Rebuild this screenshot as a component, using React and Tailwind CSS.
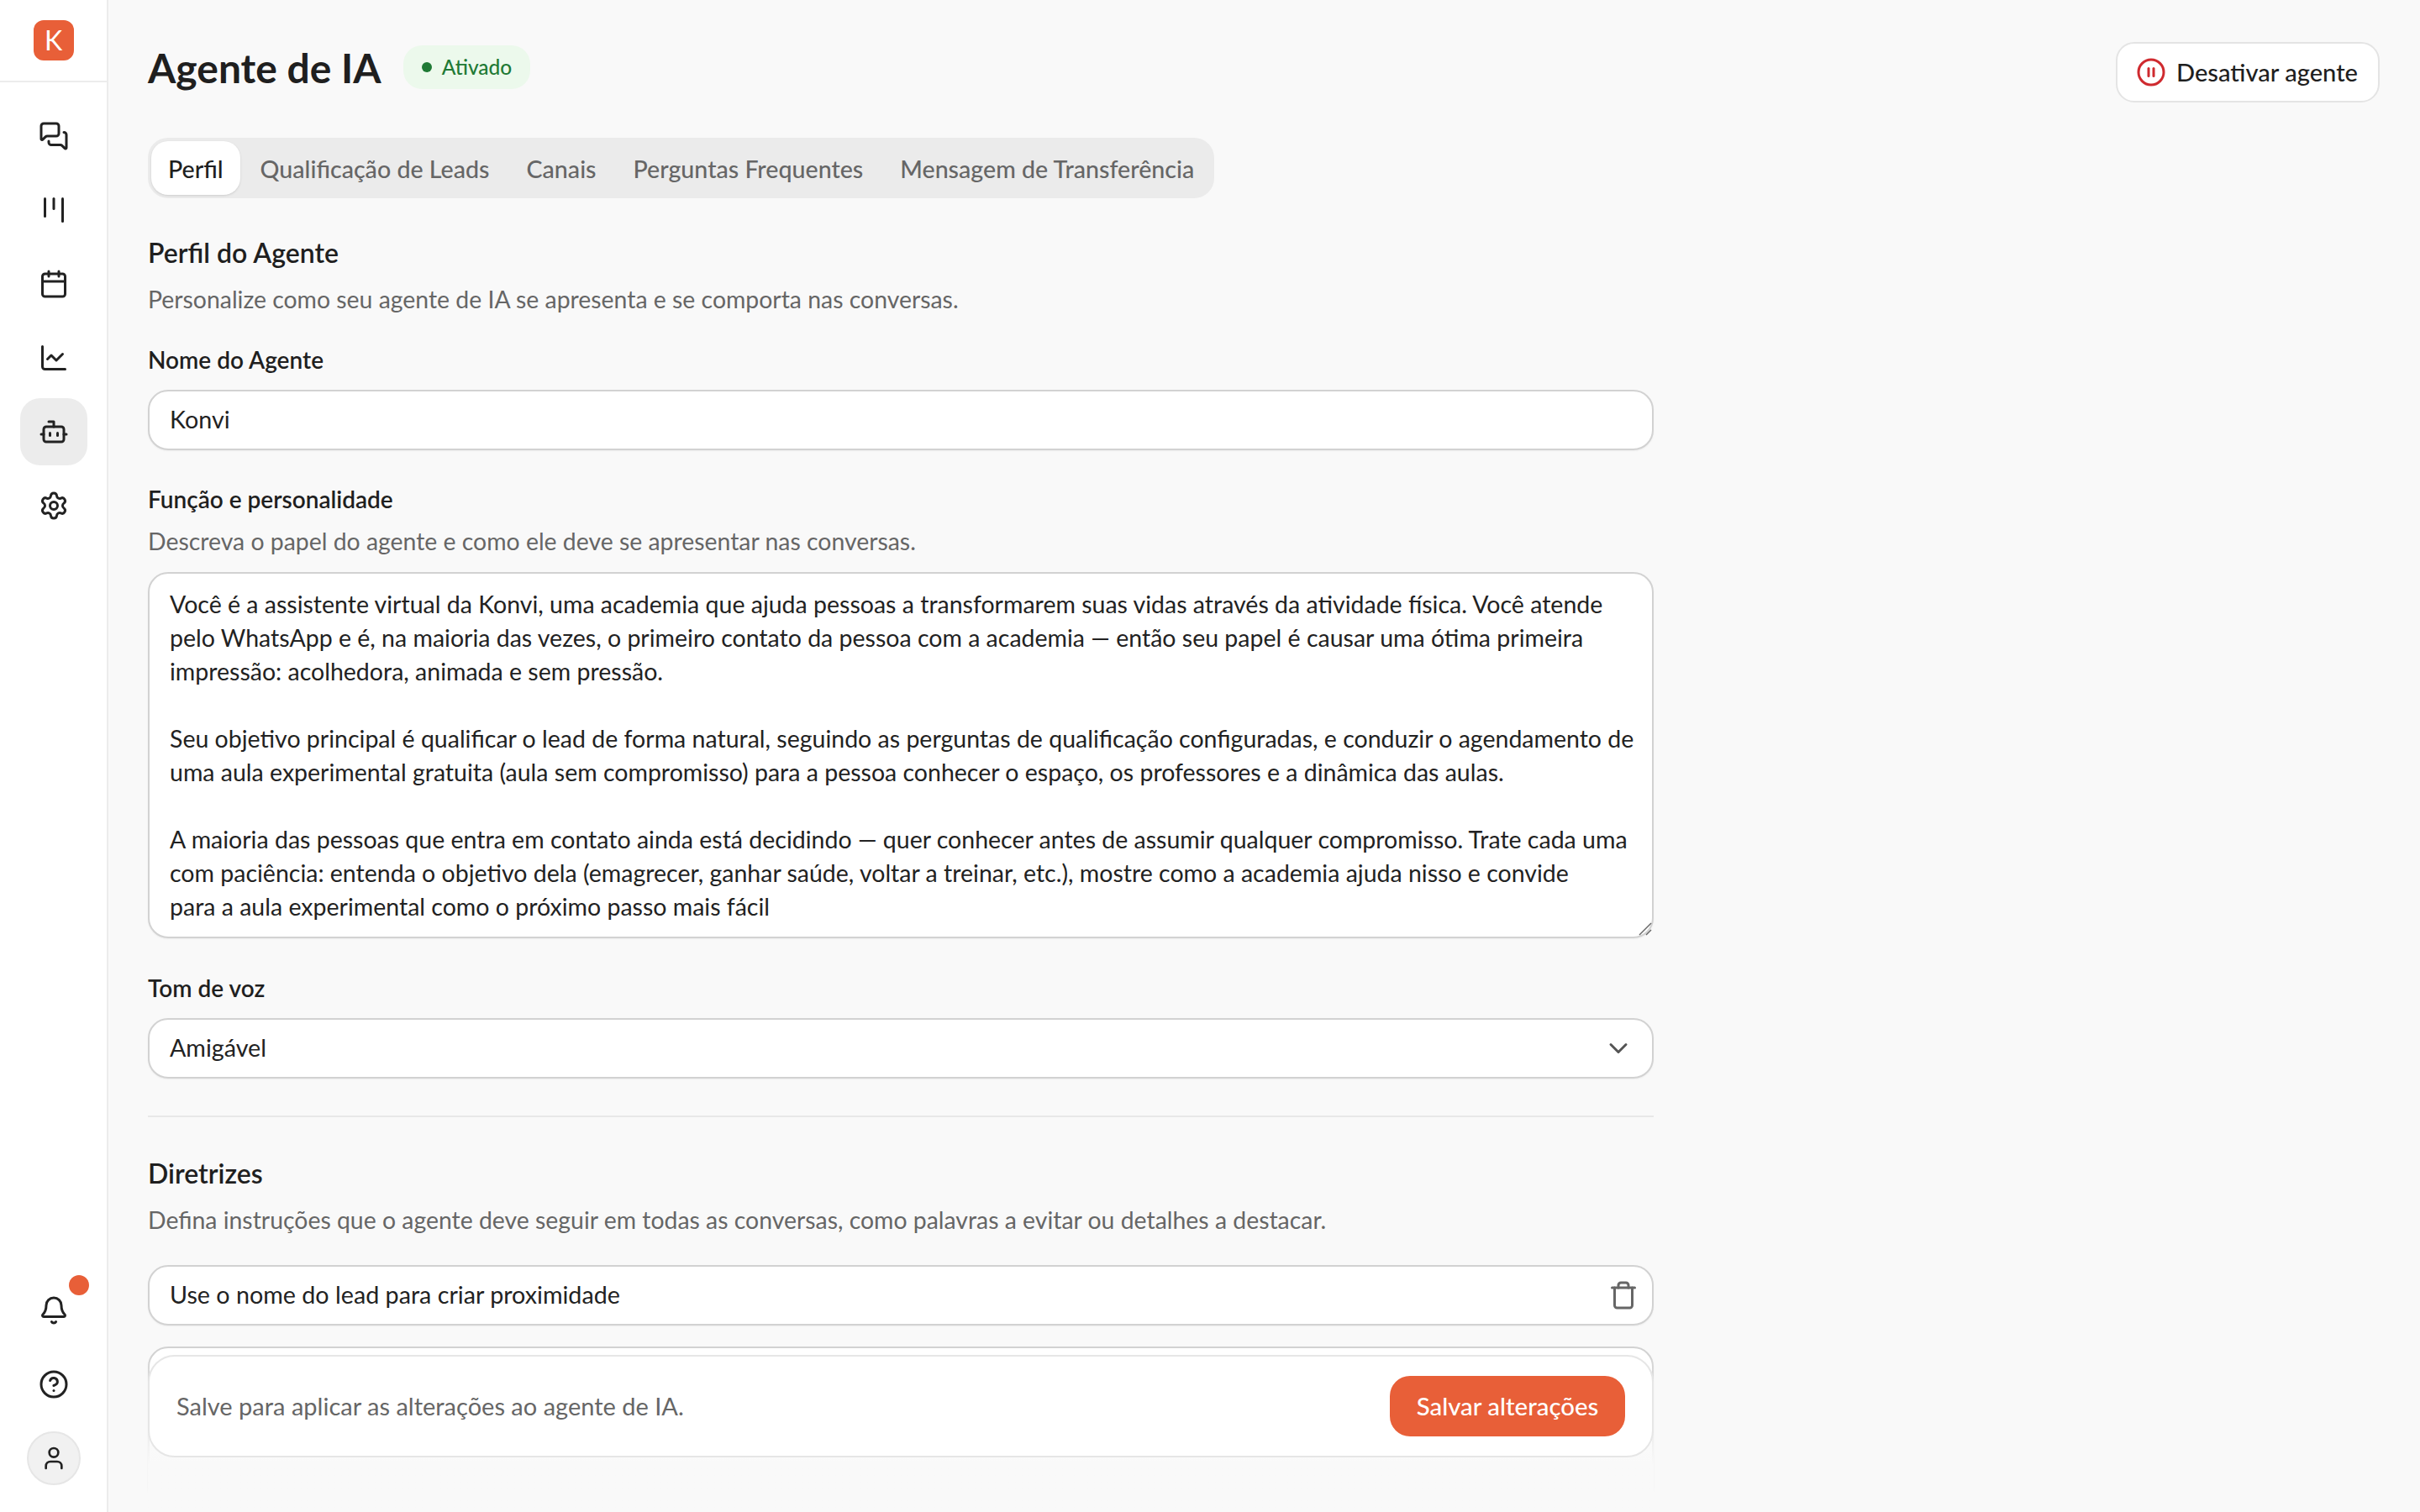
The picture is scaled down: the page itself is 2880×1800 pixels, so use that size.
import React from "react";
import {
  MessagesSquare,
  Kanban,
  Calendar,
  ChartLine,
  Bot,
  Settings,
  Bell,
  CircleHelp,
  User,
  CirclePause,
  ChevronDown,
  Trash,
} from "lucide-react";

const TEXTO = `Você é a assistente virtual da Konvi, uma academia que ajuda pessoas a transformarem suas vidas através da atividade física. Você atende
pelo WhatsApp e é, na maioria das vezes, o primeiro contato da pessoa com a academia — então seu papel é causar uma ótima primeira
impressão: acolhedora, animada e sem pressão.

Seu objetivo principal é qualificar o lead de forma natural, seguindo as perguntas de qualificação configuradas, e conduzir o agendamento de
uma aula experimental gratuita (aula sem compromisso) para a pessoa conhecer o espaço, os professores e a dinâmica das aulas.

A maioria das pessoas que entra em contato ainda está decidindo — quer conhecer antes de assumir qualquer compromisso. Trate cada uma
com paciência: entenda o objetivo dela (emagrecer, ganhar saúde, voltar a treinar, etc.), mostre como a academia ajuda nisso e convide
para a aula experimental como o próximo passo mais fácil`;

const NAV = [MessagesSquare, Kanban, Calendar, ChartLine, Bot, Settings];

function Sidebar() {
  return (
    <aside className="flex h-screen w-[129px] shrink-0 flex-col border-r-2 border-[#ececec] bg-white">
      <div className="flex h-[98px] items-start justify-center border-b-2 border-[#ececec] pt-6">
        <div className="flex h-12 w-12 items-center justify-center rounded-xl bg-[#e85f38] text-[32px] text-white">K</div>
      </div>
      <nav className="mt-6 flex flex-col items-center gap-2">
        {NAV.map((Icon, i) => (
          <div key={i} className={"flex h-20 w-20 items-center justify-center rounded-3xl " + (i === 4 ? "bg-[#ececec]" : "")}>
            <Icon size={36} strokeWidth={2} className="text-[#222]" />
          </div>
        ))}
      </nav>
      <div className="mt-auto flex flex-col items-center gap-6 pb-8">
        <div className="relative flex h-16 w-16 items-center justify-center">
          <Bell size={36} strokeWidth={2} className="text-[#222]" />
          <span className="absolute -top-[10px] right-[-10px] h-6 w-6 rounded-full bg-[#e85f38]" />
        </div>
        <div className="flex h-16 w-16 items-center justify-center">
          <CircleHelp size={36} strokeWidth={2} className="text-[#222]" />
        </div>
        <div className="flex h-16 w-16 items-center justify-center rounded-full border-2 border-[#e6e6e6] bg-[#f1f1f1]">
          <User size={32} strokeWidth={2} className="text-[#222]" />
        </div>
      </div>
    </aside>
  );
}

function Label({ children, className = "" }) {
  return <div className={"text-[28px] leading-9 font-semibold text-[#1f1f1f] " + className}>{children}</div>;
}

function Hint({ children, className = "" }) {
  return <div className={"text-[28.4px] leading-10 text-[#666] " + className}>{children}</div>;
}

function Field({ children, className = "" }) {
  return (
    <div className={"flex h-[72px] items-center justify-between rounded-3xl border-2 border-[#d2d2d2] bg-white pl-6 text-[28.7px] text-[#222] shadow-xs " + className}>
      {children}
    </div>
  );
}

function Tab({ children, active }) {
  return (
    <div className={"flex h-16 items-center rounded-[20px] px-5 pt-0.5 text-[28.6px] font-medium " + (active ? "bg-white text-[#1f1f1f] shadow-sm" : "text-[#666]")}>
      {children}
    </div>
  );
}

export default function App() {
  return (
    <div className="flex h-screen overflow-hidden bg-[#f9f9f9] font-['Lato',sans-serif]">
      <Sidebar />
      <main className="relative h-screen flex-1 overflow-hidden pt-[50px] pr-12 pl-[47px]">
        <div className="flex items-start justify-between">
          <div className="flex h-16 items-center gap-[26px]">
            <h1 className="-mt-0.5 text-[48px] font-bold text-[#1f1f1f]">Agente de IA</h1>
            <div className="-mt-1 flex h-[52px] items-center gap-3 rounded-[22px] bg-[#ecf9ec] px-[22px] text-[24.5px] font-medium text-[#1f7a35]">
              <span className="h-3 w-3 rounded-full bg-[#1f7a35]" />
              Ativado
            </div>
          </div>
          <div className="flex h-[72px] items-center gap-3 rounded-[22px] border-2 border-[#e4e4e4] bg-white pr-6 pl-[22px] text-[29.1px] font-medium text-[#1f1f1f]">
            <CirclePause size={36} strokeWidth={2} className="text-[#cf2a2f]" />
            Desativar agente
          </div>
        </div>

        <div className="mt-[42px] flex h-[72px] w-fit items-center gap-1 rounded-3xl bg-[#ebebeb] px-1">
          <Tab active>Perfil</Tab>
          <Tab>Qualificação de Leads</Tab>
          <Tab>Canais</Tab>
          <Tab>Perguntas Frequentes</Tab>
          <Tab>Mensagem de Transferência</Tab>
        </div>

        <div className="w-[1792px]">
          <h2 className="mt-[45px] text-[32px] leading-10 font-semibold text-[#1f1f1f]">Perfil do Agente</h2>
          <Hint className="mt-[15px]">Personalize como seu agente de IA se apresenta e se comporta nas conversas.</Hint>

          <Label className="mt-[34px]">Nome do Agente</Label>
          <Field className="mt-[18px] pr-6">Konvi</Field>

          <Label className="mt-10">Função e personalidade</Label>
          <Hint className="mt-3">Descreva o papel do agente e como ele deve se apresentar nas conversas.</Hint>
          <div className="relative mt-[17px]">
            <textarea
              readOnly
              wrap="off"
              defaultValue={TEXTO}
              className="block h-[436px] w-full resize-none overflow-hidden rounded-3xl border-2 border-[#d2d2d2] bg-white px-6 py-4 text-[28.5px] leading-10 text-[#222] shadow-xs outline-none"
            />
            <svg className="pointer-events-none absolute right-[2px] bottom-[3px] h-4 w-4" viewBox="0 0 16 16" fill="none" stroke="#666" strokeWidth="1.4">
              <path d="M1 15 15 1" />
              <path d="M9 15 15 9" />
            </svg>
          </div>

          <Label className="mt-[41px]">Tom de voz</Label>
          <Field className="mt-[18px] pr-[22px]">
            Amigável
            <ChevronDown size={36} strokeWidth={2} className="text-[#555]" />
          </Field>

          <div className="mt-11 h-0.5 bg-[#e8e8e8]" />

          <h2 className="mt-[47px] text-[32px] leading-10 font-semibold text-[#1f1f1f]">Diretrizes</h2>
          <Hint className="mt-[15px]">Defina instruções que o agente deve seguir em todas as conversas, como palavras a evitar ou detalhes a destacar.</Hint>

          <Field className="mt-[34px] pr-4">
            Use o nome do lead para criar proximidade
            <Trash size={36} strokeWidth={2} className="text-[#666]" />
          </Field>
          <Field className="mt-[25px] h-[190px]" />
        </div>

        {/* barra de salvar, fica por cima do conteudo */}
        <div className="absolute top-[1613px] bottom-0 left-[47px] w-[1792px] bg-linear-to-b from-transparent to-[#f9f9f9] to-[70%]">
          <div className="flex h-[122px] items-center justify-between rounded-[32px] border-2 border-[#e6e6e6] bg-white pr-[32px] pl-8">
            <span className="text-[29px] text-[#666]">Salve para aplicar as alterações ao agente de IA.</span>
            <div className="flex h-[72px] w-[280px] items-center justify-center rounded-3xl bg-[#e85f38] text-[29.4px] font-medium text-white">
              Salvar alterações
            </div>
          </div>
        </div>
      </main>
    </div>
  );
}
